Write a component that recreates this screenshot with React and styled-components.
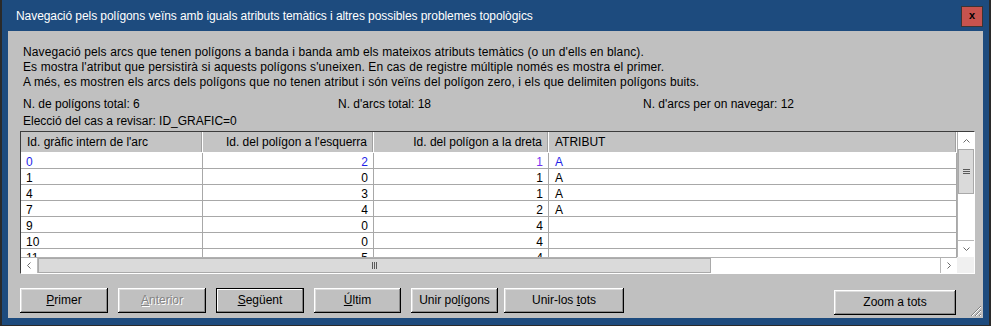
import React from 'react';
import styled, { createGlobalStyle, css } from 'styled-components';

const Global = createGlobalStyle`
  html, body { margin: 0; padding: 0; background: #1d4b7e; }
  body { width: 991px; height: 326px; overflow: hidden; font-family: "Liberation Sans", Arial, sans-serif; font-size: 12px; color: #000; }
`;

const Frame = styled.div`
  box-sizing: border-box;
  width: 991px;
  height: 326px;
  background: #1d4b7e;
  border-left: 2px solid #2a2a2a;
  border-right: 2px solid #2a2a2a;
  border-bottom: 1px solid #2a2a2a;
  display: flex;
  flex-direction: column;
`;

const TitleBar = styled.div`
  height: 31px;
  flex: none;
  display: flex;
  align-items: center;
  justify-content: space-between;
  padding: 0 6px 0 14px;
  color: #fff;
  font-size: 12px;
  letter-spacing: -0.07px;
`;

const CloseBtn = styled.div`
  box-sizing: border-box;
  width: 22px;
  height: 21px;
  margin-top: 2px;
  background: #c7534e;
  border: 1px solid #3a3535;
  display: flex;
  align-items: center;
  justify-content: center;
  color: #000;
  font-weight: bold;
  font-size: 11px;
  line-height: 1;
  padding-bottom: 2px;
  letter-spacing: 0;
`;

const Content = styled.div`
  position: relative;
  flex: 1;
  margin: 0 6px 7px 6px;
  background: #c0c0c0;
  padding: 13px 8px 0 12px;
  display: flex;
  flex-direction: column;
`;

const Desc = styled.div`
  margin-left: 3px;
  line-height: 15px;
  letter-spacing: 0.12px;
  padding-top: 1px;
  height: 45px;
  box-sizing: border-box;
`;

const Stats = styled.div`
  margin: 8px 0 0 3px;
  display: grid;
  grid-template-columns: 315px 305px auto;
  line-height: 15px;
`;

const Line = styled.div`
  margin: 2px 0 0 3px;
  line-height: 15px;
`;

const TableFrame = styled.div`
  margin-top: 2px;
  height: 143px;
  box-sizing: border-box;
  border: 1px solid;
  border-color: #3c3c3c #ffffff #ffffff #3c3c3c;
  display: grid;
  grid-template-columns: 1fr 17px;
  grid-template-rows: 125px 16px;
  background: #fff;
`;

const DataArea = styled.div`
  overflow: hidden;
  background: #fff;
`;

const COLS = '182px 171px 175px 1fr';

const HeaderRow = styled.div`
  display: grid;
  grid-template-columns: ${COLS};
  height: 21px;
  background: #c4c4c4;
  box-sizing: border-box;
  border-bottom: 1px solid #fff;
`;

const HeaderCell = styled.div`
  padding: 0 ${(p) => (p.$right ? '6px' : '0')} 0 ${(p) => (p.$right ? '0' : '6px')};
  text-align: ${(p) => (p.$right ? 'right' : 'left')};
  line-height: 20px;
  border-right: 1px solid #fff;
  box-shadow: inset -1px 0 0 #a0a0a0;
  white-space: nowrap;
  overflow: hidden;
`;

const Row = styled.div`
  display: grid;
  grid-template-columns: ${COLS};
  height: 16px;
  box-sizing: border-box;
  border-bottom: 1px solid #a8a8a8;
  color: ${(p) => (p.$active ? '#1f1fe8' : '#000')};
`;

const Cell = styled.div`
  padding: 0 ${(p) => (p.$right ? '5px' : '0')} 0 ${(p) => (p.$right ? '0' : (p.$wide ? '6px' : '5px'))};
  text-align: ${(p) => (p.$right ? 'right' : 'left')};
  line-height: 18px;
  border-right: 1px solid #a8a8a8;
  white-space: nowrap;
  overflow: hidden;
  ${(p) => p.$color && css`color: ${p.$color};`}
`;

const VScroll = styled.div`
  grid-row: 1;
  grid-column: 2;
  display: flex;
  flex-direction: column;
  background: #fff;
  border-left: 1px solid #b0b0b0;
`;

const ArrowBox = styled.div`
  flex: none;
  width: ${(p) => (p.$h ? '17px' : 'auto')};
  height: ${(p) => (p.$h ? 'auto' : '17px')};
  display: flex;
  align-items: center;
  justify-content: center;
  background: #fff;
  box-sizing: border-box;
  ${(p) => p.$bt && css`border-top: 1px solid #b8b8b8;`}
  ${(p) => p.$bl && css`border-left: 1px solid #b8b8b8;`}
  ${(p) => p.$br && css`border-right: 1px solid #b8b8b8;`}
`;

const Thumb = styled.div`
  flex: none;
  box-sizing: border-box;
  background: #dadada;
  border: 1px solid #a9a9a9;
  display: flex;
  align-items: center;
  justify-content: center;
  ${(p) => (p.$h ? css`width: ${p.$size}px;` : css`height: ${p.$size}px;`)}
`;

const Track = styled.div`
  flex: 1;
  background: #fff;
`;

const HScroll = styled.div`
  grid-row: 2;
  grid-column: 1;
  display: flex;
  background: #fff;
  border-top: 1px solid #b0b0b0;
`;

const Corner = styled.div`
  grid-row: 2;
  grid-column: 2;
  background: #f0f0f0;
`;

const Buttons = styled.div`
  display: flex;
  align-items: flex-start;
  margin-top: 14px;
  padding-right: 19px;
`;

const Btn = styled.div`
  box-sizing: border-box;
  width: ${(p) => p.$w || 88}px;
  height: 25px;
  margin-left: ${(p) => (p.$ml != null ? p.$ml : 10)}px;
  margin-top: ${(p) => p.$mt || 0}px;
  background: #c0c0c0;
  display: flex;
  align-items: center;
  justify-content: center;
  padding-bottom: 1px;
  font-size: 12px;
  color: ${(p) => (p.$disabled ? '#848484' : '#000')};
  ${(p) => p.$disabled && css`text-shadow: 1px 1px 0 #fff;`}
  box-shadow: ${(p) =>
    p.$default
      ? 'inset 0 0 0 1px #000, inset -2px -2px 0 #808080, inset 2px 2px 0 #fff'
      : 'inset -1px -1px 0 #000, inset 1px 1px 0 #fff, inset -2px -2px 0 #8a8a8a, inset 2px 2px 0 #dcdcdc'};
`;

const Spacer = styled.div`
  flex: 1;
`;

const Grip = styled.svg`
  position: absolute;
  right: 1px;
  bottom: 1px;
`;

const Chev = ({ dir }) => {
  const pts = {
    up: '0.5,4.5 3.5,1.5 6.5,4.5',
    down: '0.5,1.5 3.5,4.5 6.5,1.5',
    left: '4.5,0.5 1.5,3.5 4.5,6.5',
    right: '1.5,0.5 4.5,3.5 1.5,6.5',
  }[dir];
  const vert = dir === 'up' || dir === 'down';
  return (
    <svg width={vert ? 7 : 6} height={vert ? 6 : 7} viewBox={vert ? '0 0 7 6' : '0 0 6 7'}>
      <polyline points={pts} fill="none" stroke="#6a6a6a" strokeWidth="1" />
    </svg>
  );
};

const rows = [
  ['0', '2', '1', 'A'],
  ['1', '0', '1', 'A'],
  ['4', '3', '1', 'A'],
  ['7', '4', '2', 'A'],
  ['9', '0', '4', ''],
  ['10', '0', '4', ''],
  ['11', '5', '4', ''],
];

export default function App() {
  return (
    <>
      <Global />
      <Frame>
        <TitleBar>
          <span>Navegació pels polígons veïns amb iguals atributs temàtics i altres possibles problemes topològics</span>
          <CloseBtn>x</CloseBtn>
        </TitleBar>
        <Content>
          <Desc>
            <div>Navegació pels arcs que tenen polígons a banda i banda amb els mateixos atributs temàtics (o un d'ells en blanc).</div>
            <div>Es mostra l'atribut que persistirà si aquests polígons s'uneixen. En cas de registre múltiple només es mostra el primer.</div>
            <div>A més, es mostren els arcs dels polígons que no tenen atribut i són veïns del polígon zero, i els que delimiten polígons buits.</div>
          </Desc>
          <Stats>
            <span>N. de polígons total: 6</span>
            <span>N. d'arcs total: 18</span>
            <span>N. d'arcs per on navegar: 12</span>
          </Stats>
          <Line>Elecció del cas a revisar: ID_GRAFIC=0</Line>
          <TableFrame>
            <DataArea>
              <HeaderRow>
                <HeaderCell>Id. gràfic intern de l'arc</HeaderCell>
                <HeaderCell $right>Id. del polígon a l'esquerra</HeaderCell>
                <HeaderCell $right>Id. del polígon a la dreta</HeaderCell>
                <HeaderCell>ATRIBUT</HeaderCell>
              </HeaderRow>
              {rows.map((r, i) => (
                <Row key={i} $active={i === 0}>
                  <Cell>{r[0]}</Cell>
                  <Cell $right>{r[1]}</Cell>
                  <Cell $right $color={i === 0 ? '#7433f0' : undefined}>{r[2]}</Cell>
                  <Cell $wide>{r[3]}</Cell>
                </Row>
              ))}
            </DataArea>
            <VScroll>
              <ArrowBox><Chev dir="up" /></ArrowBox>
              <Thumb $size={45}>
                <svg width="7" height="7" viewBox="0 0 7 7">
                  <path d="M0 1.5H7M0 3.5H7M0 5.5H7" stroke="#5a5a5a" strokeWidth="1" />
                </svg>
              </Thumb>
              <Track />
              <ArrowBox $bt><Chev dir="down" /></ArrowBox>
            </VScroll>
            <HScroll>
              <ArrowBox $h $br><Chev dir="left" /></ArrowBox>
              <Thumb $h $size={673}>
                <svg width="7" height="7" viewBox="0 0 7 7">
                  <path d="M1.5 0V7M3.5 0V7M5.5 0V7" stroke="#5a5a5a" strokeWidth="1" />
                </svg>
              </Thumb>
              <Track />
              <ArrowBox $h $bl><Chev dir="right" /></ArrowBox>
            </HScroll>
            <Corner />
          </TableFrame>
          <Buttons>
            <Btn $ml={0}><span><u>P</u>rimer</span></Btn>
            <Btn $disabled><span><u>A</u>nterior</span></Btn>
            <Btn $default><span><u>S</u>egüent</span></Btn>
            <Btn $w={87}><span><u>Ú</u>ltim</span></Btn>
            <Btn $w={87}><span>Unir po<u>l</u>ígons</span></Btn>
            <Btn $w={120} $ml={6}><span>Unir-los <u>t</u>ots</span></Btn>
            <Spacer />
            <Btn $w={122} $mt={2}><span>Zoom a tots</span></Btn>
          </Buttons>
          <Grip width="14" height="14" viewBox="0 0 14 14">
            <path d="M13 3L3 13M13 7L7 13M13 11L11 13" stroke="#808080" strokeWidth="1" />
            <path d="M13 4L4 13M13 8L8 13M13 12L12 13" stroke="#ffffff" strokeWidth="1" />
          </Grip>
        </Content>
      </Frame>
    </>
  );
}
